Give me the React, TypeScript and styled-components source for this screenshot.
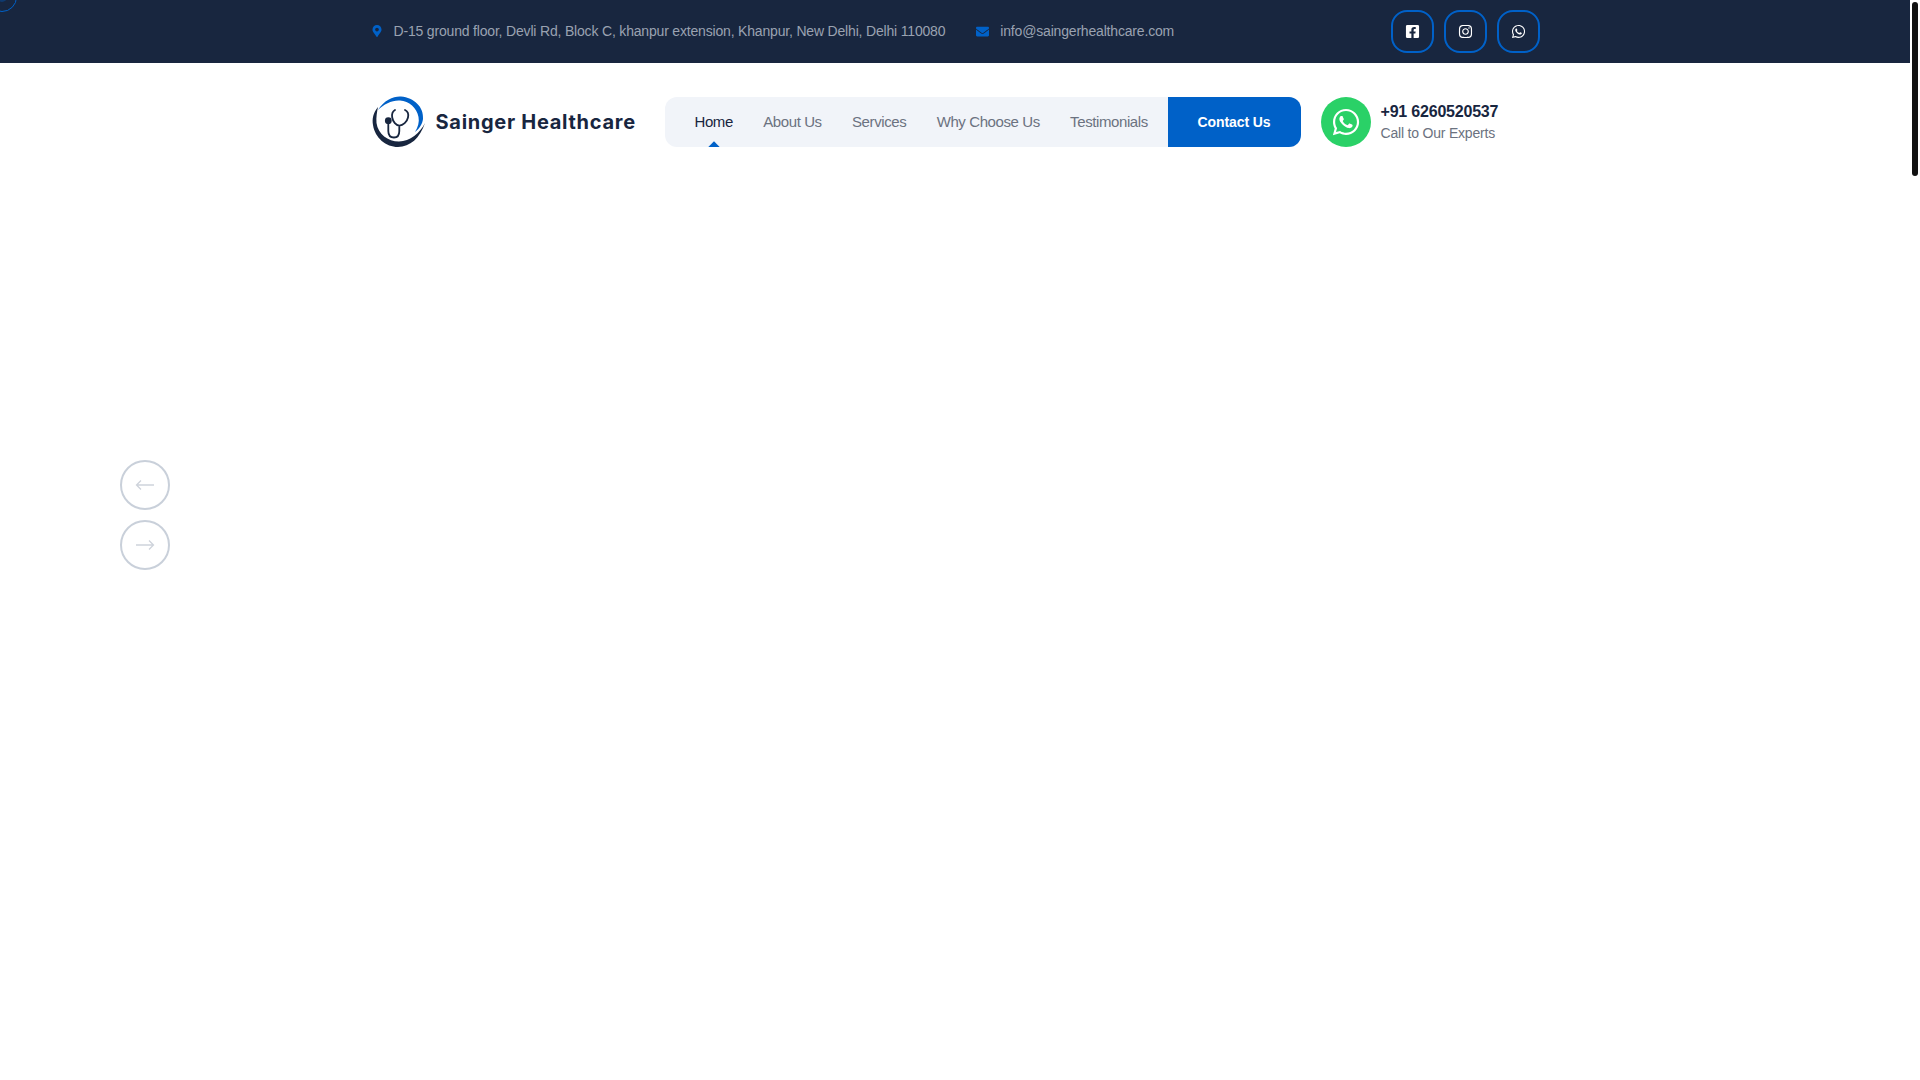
import styled, { createGlobalStyle } from 'styled-components';
import {
  FaEnvelope,
  FaFacebookSquare,
  FaInstagram,
  FaMapMarkerAlt,
  FaWhatsapp,
} from 'react-icons/fa';

const navLinks = ['Home', 'About Us', 'Services', 'Why Choose Us', 'Testimonials'];

const GlobalStyle = createGlobalStyle`
  body {
    margin: 0;
    background: #ffffff;
    font-family: 'Liberation Sans', Arial, sans-serif;
  }
`;

const App = () => {
  return (
    <Page>
      <GlobalStyle />
      <Main>
        <CursorRing />
        <TopBar>
          <Container>
            <ContactList>
              <ContactItem>
                <FaMapMarkerAlt size={12} />
                D-15 ground floor, Devli Rd, Block C, khanpur extension, Khanpur, New Delhi, Delhi 110080
              </ContactItem>
              <ContactItem>
                <FaEnvelope size={13} />
                info@saingerhealthcare.com
              </ContactItem>
            </ContactList>
            <Socials>
              <SocialLink href="#">
                <FaFacebookSquare size={15} />
              </SocialLink>
              <SocialLink href="#">
                <FaInstagram size={15} />
              </SocialLink>
              <SocialLink href="#">
                <FaWhatsapp size={15} />
              </SocialLink>
            </Socials>
          </Container>
        </TopBar>

        <Header>
          <Logo>
            <svg width="54" height="52" viewBox="0 0 54 52" fill="none">
              <path
                d="M6 14C12 4 22 0 29 .5 42 1.5 52 11 51 23 50.5 28 47 33 43 36 46 31 47.5 26 46.5 21 45 12 37 5 28 4.5 20 4 12 8 6 14Z"
                fill="#0061c8"
              />
              <path
                d="M6 11C1 17 0 23 1 29 3 42 14 51 26 51 38 51 48 42 53 27 48 37 38 45.5 27 45.5 16 45.5 6 38 4.5 27 4 21 5 16 6 11Z"
                fill="#18263f"
              />
              <circle cx="16.3" cy="24.7" r="3.4" fill="#18263f" />
              <path
                d="M23 14C20.5 15.5 19.7 18.5 20.2 21.5 21 26 24 29.5 27.3 29.7 31 29.5 35 26 36 21.5 36.7 18.5 36 15.5 33 14M16.3 25V35C16.3 39 18.5 41.5 22 41.5 25.5 41.5 27.3 39 27.3 35V30"
                stroke="#18263f"
                strokeWidth="1.8"
                strokeLinecap="round"
              />
            </svg>
            <LogoText>Sainger Healthcare</LogoText>
          </Logo>

          <Nav>
            <NavLinks>
              {navLinks.map((link, index) => (
                <NavLink key={link} href="#" $active={index === 0}>
                  {link}
                </NavLink>
              ))}
            </NavLinks>
            <ContactButton href="#">Contact Us</ContactButton>
          </Nav>

          <Phone>
            <PhoneIcon>
              <FaWhatsapp size={30} />
            </PhoneIcon>
            <PhoneText>
              <PhoneNumber>+91 6260520537</PhoneNumber>
              <PhoneLabel>Call to Our Experts</PhoneLabel>
            </PhoneText>
          </Phone>
        </Header>

        <SliderArrows>
          <ArrowButton aria-label="Previous">
            <svg width="20" height="12" viewBox="0 0 20 12" fill="none">
              <path d="M19 6H1.5M6 1.5 1.5 6 6 10.5" stroke="#ced3db" strokeWidth="1.3" />
            </svg>
          </ArrowButton>
          <ArrowButton aria-label="Next">
            <svg width="20" height="12" viewBox="0 0 20 12" fill="none">
              <path d="M1 6H18.5M14 1.5 18.5 6 14 10.5" stroke="#ced3db" strokeWidth="1.3" />
            </svg>
          </ArrowButton>
        </SliderArrows>
      </Main>

      <ScrollTrack>
        <ScrollThumb />
      </ScrollTrack>
    </Page>
  );
};

export default App;

const Page = styled.div`
  height: 100vh;
  display: flex;
  overflow: hidden;
`;

const Main = styled.main`
  position: relative;
  flex: 1;
  min-width: 0;
`;

const ScrollTrack = styled.aside`
  width: 10px;
  box-sizing: border-box;
  padding: 2px;
`;

const ScrollThumb = styled.div`
  height: 174px;
  border-radius: 3px;
  background: #111111;
`;

const CursorRing = styled.div`
  position: absolute;
  top: -18px;
  left: -13px;
  width: 30px;
  height: 30px;
  box-sizing: border-box;
  border: 1px solid #0061c8;
  border-radius: 50%;
  z-index: 10;
  &::after {
    content: '';
    position: absolute;
    top: 9px;
    left: 9px;
    width: 10px;
    height: 10px;
    border-radius: 50%;
    background: #0061c8;
    opacity: 0.35;
  }
`;

const TopBar = styled.div`
  height: 63px;
  background: #18263f;
`;

const Container = styled.div`
  width: 1169px;
  height: 100%;
  margin: 0 auto;
  display: flex;
  align-items: center;
  justify-content: space-between;
`;

const ContactList = styled.div`
  display: flex;
  gap: 31px;
  padding-bottom: 1px;
`;

const ContactItem = styled.div`
  display: flex;
  align-items: center;
  gap: 11px;
  font-size: 14px;
  letter-spacing: -0.18px;
  color: #9aa2b1;
  svg {
    color: #0061c8;
  }
`;

const Socials = styled.div`
  display: flex;
  gap: 10px;
`;

const SocialLink = styled.a`
  width: 43px;
  height: 43px;
  box-sizing: border-box;
  display: flex;
  align-items: center;
  justify-content: center;
  border: 2px solid #0061c8;
  border-radius: 16px;
  color: #ffffff;
`;

const Header = styled.header`
  width: 1169px;
  margin: 0 auto;
  padding-top: 34px;
  display: flex;
  align-items: flex-start;
`;

const Logo = styled.div`
  width: 294px;
  height: 50px;
  display: flex;
  align-items: center;
  gap: 10px;
  padding-left: 1px;
  box-sizing: border-box;
`;

const LogoText = styled.span`
  font-family: Inter, sans-serif;
  font-size: 20px;
  font-weight: 700;
  letter-spacing: 0.72px;
  color: #18263f;
  white-space: nowrap;
`;

const Nav = styled.nav`
  width: 636px;
  height: 50px;
  display: flex;
  justify-content: space-between;
  background: #f1f4f9;
  border-radius: 12px;
  overflow: hidden;
`;

const NavLinks = styled.div`
  display: flex;
  gap: 30.3px;
  padding-left: 30px;
`;

const NavLink = styled.a<{ $active?: boolean }>`
  position: relative;
  display: flex;
  align-items: center;
  padding-bottom: 2px;
  font-size: 15px;
  letter-spacing: -0.4px;
  text-decoration: none;
  color: ${(props) => (props.$active ? '#18263f' : '#6b7280')};
  &::after {
    content: '';
    display: ${(props) => (props.$active ? 'block' : 'none')};
    position: absolute;
    left: 50%;
    bottom: -4px;
    width: 8px;
    height: 8px;
    margin-left: -4px;
    background: #0061c8;
    transform: rotate(45deg);
  }
`;

const ContactButton = styled.a`
  display: flex;
  align-items: center;
  padding: 0 30px;
  background: #0061c8;
  font-size: 14px;
  font-weight: 700;
  letter-spacing: -0.1px;
  color: #ffffff;
  text-decoration: none;
`;

const Phone = styled.div`
  margin-left: 20px;
  display: flex;
  align-items: center;
  gap: 10px;
`;

const PhoneIcon = styled.div`
  width: 50px;
  height: 50px;
  display: flex;
  align-items: center;
  justify-content: center;
  border-radius: 50%;
  background: #2ad167;
  color: #ffffff;
`;

const PhoneText = styled.div`
  display: flex;
  flex-direction: column;
  gap: 4px;
`;

const PhoneNumber = styled.div`
  font-size: 16px;
  font-weight: 700;
  letter-spacing: -0.2px;
  color: #18263f;
`;

const PhoneLabel = styled.div`
  font-size: 14px;
  letter-spacing: -0.2px;
  color: #6b7280;
`;

const SliderArrows = styled.div`
  position: absolute;
  top: 460px;
  left: 120px;
  display: flex;
  flex-direction: column;
  gap: 10px;
`;

const ArrowButton = styled.button`
  width: 50px;
  height: 50px;
  padding: 0;
  display: flex;
  align-items: center;
  justify-content: center;
  background: transparent;
  border: 2px solid #c9d0da;
  border-radius: 50%;
`;
